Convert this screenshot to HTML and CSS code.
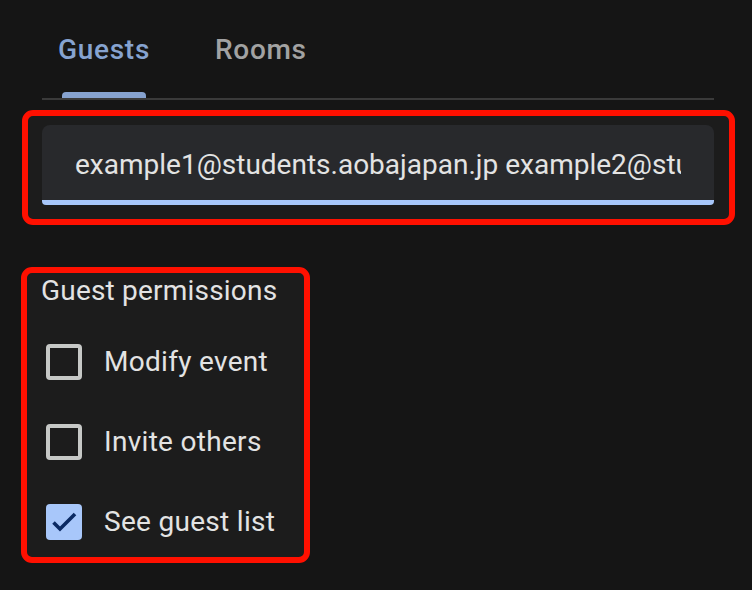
FILE: index.html
```html
<!DOCTYPE html>
<html>
<head>
<meta charset="utf-8">
<link rel="stylesheet" href="styles.css">
</head>
<body>
<div class="page">
  <div class="tabs">
    <div class="tab active">
      <span class="tab-label">Guests</span>
      <span class="indicator"></span>
    </div>
    <div class="tab">
      <span class="tab-label">Rooms</span>
      <span class="indicator hidden"></span>
    </div>
  </div>

  <div class="mark mark-input">
    <div class="field">
      <div class="field-text">example1@students.aobajapan.jp example2@students.aobajapan.jp</div>
    </div>
  </div>

  <div class="mark mark-perms">
    <div class="perm-title">Guest permissions</div>
    <div class="perm-list">
      <div class="perm-row">
        <span class="box"></span>
        <span class="perm-label">Modify event</span>
      </div>
      <div class="perm-row">
        <span class="box"></span>
        <span class="perm-label">Invite others</span>
      </div>
      <div class="perm-row">
        <span class="box checked">
          <svg viewBox="0 0 36 36" width="36" height="36"><polyline points="7.5,18.5 14,25 29,10" fill="none" stroke="#0b2a63" stroke-width="3.6"/></svg>
        </span>
        <span class="perm-label">See guest list</span>
      </div>
    </div>
  </div>
</div>
</body>
</html>
```

FILE: styles.css
```css
* { box-sizing: border-box; }
html, body {
  margin: 0;
  padding: 0;
  background: #151515;
  font-family: Roboto, "Noto Sans", Arial, sans-serif;
}
.page {
  width: 752px;
  height: 590px;
  overflow: hidden;
}
.tabs {
  display: flex;
  gap: 33px;
  margin-left: 42px;
  width: 672px;
  border-bottom: 2px solid #3a3a3a;
}
.tab {
  display: flex;
  flex-direction: column;
  align-items: center;
  padding: 34px 16px 0;
}
.tab-label {
  font-size: 28px;
  line-height: 32px;
  font-weight: 500;
  letter-spacing: 0.7px;
  color: #a2a2a2;
}
.tab.active .tab-label { color: #86a3d0; }
.indicator {
  display: block;
  width: 84px;
  height: 6px;
  margin-top: 26px;
  background: #86a2cf;
  border-radius: 4px 4px 0 0;
}
.indicator.hidden { visibility: hidden; }

.mark {
  border: 6px solid #ff1000;
  border-radius: 11px;
  background: #1c1c1c;
}
.mark-input {
  margin: 10px 0 0 22px;
  width: 713px;
  padding: 9px 15px 14px 14px;
}
.field {
  height: 80px;
  background: #28292c;
  border-radius: 8px 8px 4px 4px;
  border-bottom: 5px solid #a8c7fa;
  padding: 24px 33px 0;
}
.field-text {
  font-size: 28px;
  line-height: 32px;
  color: #e3e3e3;
  white-space: nowrap;
  overflow: hidden;
}

.mark-perms {
  margin: 42px 0 0 21px;
  width: 289px;
  height: 296px;
  padding: 2px 0 0 14px;
}
.perm-title {
  font-size: 28px;
  line-height: 32px;
  letter-spacing: 0.2px;
  color: #e3e3e3;
}
.perm-list {
  display: flex;
  flex-direction: column;
  gap: 44px;
  margin-top: 37px;
  padding-left: 5px;
}
.perm-row {
  display: flex;
  align-items: center;
  gap: 22px;
  height: 36px;
}
.box {
  width: 36px;
  height: 36px;
  border: 4px solid #c6c8c6;
  border-radius: 4px;
  flex: none;
}
.box.checked {
  border: none;
  background: #a8c7fa;
}
.box svg { display: block; }
.perm-label {
  font-size: 28px;
  line-height: 36px;
  letter-spacing: 0.3px;
  color: #e3e3e3;
}
```
